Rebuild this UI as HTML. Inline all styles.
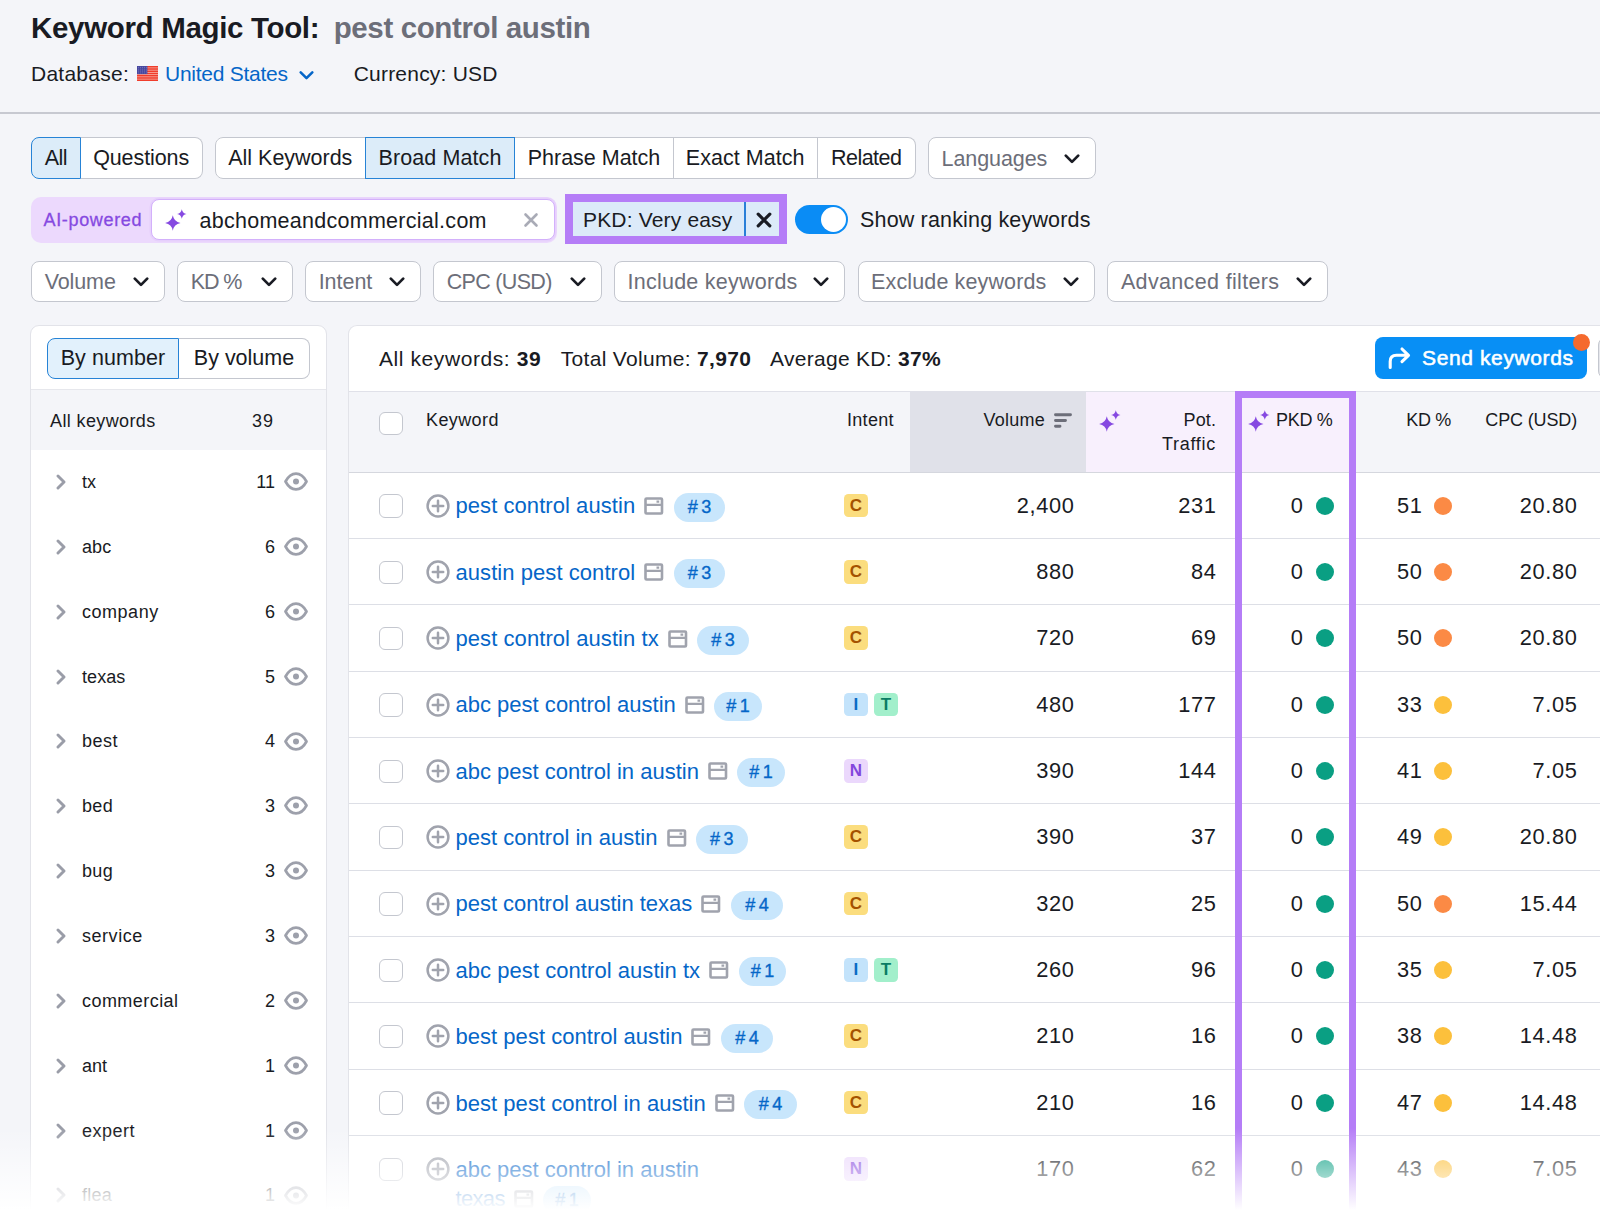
<!DOCTYPE html>
<html lang="en"><head><meta charset="utf-8"><title>Keyword Magic Tool: pest control austin</title>
<style>
*{box-sizing:border-box;margin:0;padding:0}
html,body{width:1600px;height:1213px;overflow:hidden;background:#f4f5f9}
body{font-family:"Liberation Sans",sans-serif;color:#191b23;font-size:20px}
#page{position:relative;width:1600px;height:1213px;overflow:hidden;background:#f4f5f9}
svg{display:block;flex:none}
.hdr{position:absolute;left:0;top:0;width:1600px;height:112px}
.title{position:absolute;left:31px;top:9.500px;height:36px;line-height:36px;font-size:29.500px;font-weight:700;white-space:nowrap}
.title .t2{color:#6c6e79;margin-left:14.500px;font-weight:700}
.dbrow{position:absolute;left:31px;top:60.500px;height:26px;line-height:26px;font-size:21px;white-space:nowrap;display:flex;align-items:center}
.flag{margin:0 7px 0 8px;position:relative;top:.2px;left:-.2px}
.dbv{color:#0566c8}
.dbchev{margin-left:10.500px;position:relative;top:1.500px;left:.5px;width:15px;height:15px}
.cur{margin-left:40.500px}
.hline{position:absolute;left:0;top:112px;width:1600px;height:2px;background:#c7c9d1}
.tabs{position:absolute;left:0;top:137px;width:1600px;height:42px}
.seg{position:absolute;top:0;height:42px;display:flex;border-radius:8px;background:#fff}
.sg{display:flex;align-items:center;justify-content:center;height:42px;line-height:24px;text-align:center;font-size:21.500px;border:1px solid #c4c7cf;border-left-width:0;background:#fff;white-space:nowrap}
.sg.first{border-left-width:1px;border-radius:8px 0 0 8px}
.sg.last{border-radius:0 8px 8px 0}
.sg.on{background:#dcecf9;border:1.800px solid #2683d6;position:relative;margin-left:-1px}
.sg.on.first{margin-left:0}
.dd{position:absolute;top:0;height:41px;border:1px solid #c4c7cf;border-radius:8px;background:#fff;display:flex;align-items:center;padding:0 15px 0 12.500px;color:#6c6e79;font-size:21.500px;white-space:nowrap}
.dd .ddl{position:relative;top:1px}
.sg em{position:relative;top:-.4px}
.dd .chev{margin-left:auto;position:relative;top:.7px}
.dd.tall{height:42px}
.airow{position:absolute;left:0;top:194px;width:1600px;height:50px}
.aibox{position:absolute;left:31px;top:2.500px;width:526px;height:46px;border-radius:10px;background:#ecd9fd;display:flex;align-items:center}
.ailabel{color:#8649e1;font-size:18px;margin-left:12.500px;width:107px;-webkit-text-stroke:.3px #8649e1;position:relative;top:1px}
.aiinput{width:404px;height:40.500px;background:#fff;border:1px solid #d3b0fb;border-radius:8px;display:flex;align-items:center;box-shadow:0 0 0 1.500px #e6d0fc}
.aiinput .spark{margin-left:13px}
.aidomain{margin-left:11px;font-size:21.500px;position:relative;top:1.500px}
.aix{margin-left:auto;margin-right:15px}
.pkdhl{position:absolute;left:564.700px;top:.3px;width:222px;height:49.500px;background:#b57df7;padding:8px}
.pkdchip{width:206px;height:33.500px;background:#dceaf9;display:flex;align-items:center;font-size:21px}
.pkdtxt{width:173.500px;padding-left:10.300px;height:33.500px;line-height:33.500px;border-right:2px solid #2a7fd8}
.pkdx{flex:1;display:flex;justify-content:center;position:relative;left:1.500px;top:.5px}
.pkdtxt em{position:relative;top:1px}
.toggle{position:absolute;left:795px;top:10.700px;width:52.500px;height:29px;border-radius:15px;background:#0a8cf5}
.knob{position:absolute;right:2px;top:2px;width:25px;height:25px;border-radius:13px;background:#fff}
.srk{position:absolute;left:860px;top:12px;line-height:28px;font-size:21.500px;white-space:nowrap}
.filters{position:absolute;left:0;top:261px;width:1600px;height:41px}
.left{position:absolute;left:31px;top:325px;width:295px;height:900px;background:#fff;border-radius:9px}
.left::after,.right::after{content:"";position:absolute;left:-1px;top:0;right:-.5px;bottom:0;border:1px solid #e2e3e9;border-radius:9px;pointer-events:none}
.seg2{position:absolute;left:16px;top:12.500px;height:41px;display:flex}
.seg2 .sg{height:41px;padding-top:1.500px}
.seg2 .sg.on{background:#e2f1fc}
.allkw{position:absolute;left:0;top:64px;width:295px;height:61px;border-top:1px solid #e6e7ec;background:#f4f5f9;font-size:18px}
.akl{position:absolute;left:19px;top:19.500px;line-height:22px}
.akn{position:absolute;right:52px;top:19.500px;line-height:22px}
.groups{list-style:none}
.groups li{position:absolute;left:-31px;width:325px;height:65px;margin-top:-325px;font-size:18px}
.rchev{position:absolute;left:55px;top:24px}
.gname{position:absolute;left:82px;top:21px;line-height:22px}
.gnum{position:absolute;right:50px;top:21px;line-height:22px}
.eye{position:absolute;left:284.300px;top:22.300px}
.right{position:absolute;left:349px;top:325px;width:1260px;height:900px;background:#fff;border-radius:9px 0 0 0}
.right::after{border-radius:9px 0 0 0;border-right:0}
.summary{position:absolute;left:30px;top:20.700px;line-height:26px;font-size:21px;white-space:nowrap}
.summary span{margin-right:18.800px}
.summary .s1{margin-right:19.600px}
.send{position:absolute;left:1026px;top:12px;width:212px;height:42px;border-radius:8px;background:#088ff5;color:#fff;display:flex;align-items:center;font-size:21px;white-space:nowrap}
.sendic{margin-left:12px}
.sendt{margin-left:11px;font-weight:400;-webkit-text-stroke:.55px #fff}
.odot{position:absolute;right:-3px;top:-3px;width:17px;height:17px;border-radius:50%;background:#f56a2e}
.morebtn{position:absolute;left:1249px;top:12px;width:20px;height:42px;border-radius:8px;background:#e6e7ec;border:1px solid #c4c7cf}
.thead{position:absolute;left:0;top:66px;width:1260px;height:82px;background:#f4f5f9;border-top:1px solid #e0e1e9;border-bottom:1px solid #d5d7de;font-size:18px}
.cb{position:absolute;left:30px;top:21.500px;width:23.500px;height:23.500px;border:1.500px solid #c4c7cf;border-radius:6px;background:#fff}
.th{position:absolute;top:17.300px;line-height:22px;white-space:nowrap}
.thk{left:77px}.thi{left:498px}
.thvol{position:absolute;left:561px;top:0;width:176px;height:80px;background:#e0e1e9}
.thvt{position:absolute;right:41px;top:17.300px;line-height:22px}
.sorticon{position:absolute;right:14px;top:21px}
.thpot{position:absolute;left:737px;top:0;width:151px;height:80px;background:#f8f0fd}
.thpot .spark{position:absolute;left:12.500px;top:16.500px}
.thpt{position:absolute;right:21px;top:17.300px;line-height:23.200px;text-align:right}
.thpkd{position:absolute;left:888px;top:0;width:118px;height:80px;background:#f8f0fd}
.thpkd .spark{position:absolute;left:10.500px;top:16.500px}
.thpk{position:absolute;left:39px;top:17.300px;line-height:22px}
.thkd{right:158px}.thcpc{right:32px}
.tr{position:absolute;left:0;width:1260px;height:66.400px;border-bottom:1px solid #dddfe6;font-size:21.800px}
.tr .plus{position:absolute;left:76.800px;top:21px}
.kwc{position:absolute;left:106.500px;top:18.800px;line-height:29.500px;white-space:nowrap;display:block;color:#0566c8;font-size:22px}
.kwc svg{display:inline-block;vertical-align:middle;position:relative;top:-1.700px}
.serp{margin-left:9px}
.rk{display:inline-block;vertical-align:middle;margin-left:9.500px;height:29px;line-height:29px;border-radius:15px;background:#c8e6fc;padding:0;text-align:center;text-indent:3.500px;font-size:18px;letter-spacing:3.500px;width:51.500px;position:relative;top:0px;-webkit-text-stroke:.35px #0566c8;color:#0566c8}
.intent{position:absolute;left:495.200px;top:21px;display:flex;gap:6.500px}
.ib{width:23.500px;height:23.500px;border-radius:4.500px;font-size:17px;font-weight:700;line-height:23.500px;text-align:center}
.ibC{background:#fbdd7e;color:#a45200}
.ibI{background:#c3e3fb;color:#0a6cc4}
.ibT{background:#a2efcb;color:#0a7c64}
.ibN{background:#ebd8fc;color:#8346dc}
.num{position:absolute;top:19px;line-height:28px;text-align:right;white-space:nowrap;letter-spacing:.7px;margin-right:-.7px}
.vol{right:535px}.pot{right:393px}.pkd{right:306px}.kd{right:187px}.cpc{right:32px}
.dot{position:absolute;top:24px;width:18px;height:18px;border-radius:50%}
.dg{left:967px;background:#0a9f83}
.do{left:1085px;background:#fb8a45}
.dy{left:1085px;background:#fcc03c}
.pkdcol{position:absolute;left:886px;top:66px;width:121px;height:840px;border:7.500px solid #b57df7;border-bottom:0}
.fade{position:absolute;left:0;top:1128px;width:1600px;height:85px;background:linear-gradient(to bottom,rgba(255,255,255,0),#fff 82px,#fff)}
.tr.wrap{height:90px}
em{font-style:normal}

.rk1{width:47.500px}
.rk4{width:52.300px}

#t1{letter-spacing:-0.33px}
#t2{letter-spacing:-0.38px}
#dbl{letter-spacing:0.25px}
#dbv{letter-spacing:-0.26px}
#cur{letter-spacing:0.21px}
#tb1{letter-spacing:-0.66px}
#tb2{letter-spacing:-0.10px}
#tb3{letter-spacing:-0.02px}
#tb4{letter-spacing:0.11px}
#tb5{letter-spacing:-0.02px}
#tb6{letter-spacing:0.03px}
#tb7{letter-spacing:-0.52px}
#dd1{letter-spacing:-0.07px}
#ail{letter-spacing:0.66px}
#aid{letter-spacing:0.27px}
#pkt{letter-spacing:0.17px}
#srk{letter-spacing:0.17px}
#dd2{letter-spacing:-0.11px}
#dd3{letter-spacing:-1.12px}
#dd4{letter-spacing:-0.04px}
#dd5{letter-spacing:-0.68px}
#dd6{letter-spacing:0.25px}
#dd7{letter-spacing:0.13px}
#dd8{letter-spacing:0.35px}
#tb8{letter-spacing:0.07px}
#tb9{letter-spacing:-0.01px}
#akl{letter-spacing:0.38px}
#akn{letter-spacing:0.97px}
#g1{letter-spacing:0.10px}
#g2{letter-spacing:0.09px}
#g3{letter-spacing:0.52px}
#g4{letter-spacing:0.07px}
#s1{letter-spacing:0.58px}
#s2{letter-spacing:0.31px}
#s3{letter-spacing:0.30px}
#sendt{letter-spacing:0.62px}
#thk{letter-spacing:0.40px}
#thi{letter-spacing:0.29px}
#thv{letter-spacing:0.25px}
#thp1{letter-spacing:0.09px}
#thp2{letter-spacing:0.72px}
#thpk{letter-spacing:-0.30px}
#thkd{letter-spacing:-0.34px}
#thcpc{letter-spacing:-0.15px}
#kw1{letter-spacing:0.06px}
#kw2{letter-spacing:0.06px}
#kw3{letter-spacing:0.07px}
#kw4{letter-spacing:0.01px}
#kw5{letter-spacing:0.00px}
#kw6{letter-spacing:0.01px}
#kw7{letter-spacing:-0.02px}
#kw8{letter-spacing:0.05px}
#kw9{letter-spacing:0.03px}
#kw10{letter-spacing:0.03px}
#kw11{letter-spacing:0.00px}
#kw11b{letter-spacing:-0.67px}
#g5{letter-spacing:0.53px}
#g6{letter-spacing:0.33px}
#g7{letter-spacing:0.33px}
#g8{letter-spacing:0.54px}
#g9{letter-spacing:0.45px}
#g10{letter-spacing:-0.01px}
#g11{letter-spacing:0.50px}
#g12{letter-spacing:0.23px}
</style></head><body>
<div id="page">
<header class="hdr">
<h1 class="title"><span class="t1" id="t1">Keyword Magic Tool:</span><span class="t2" id="t2">pest control austin</span></h1>
<div class="dbrow"><span class="dbl" id="dbl">Database:</span><svg class="flag" viewBox="0 0 21 15" width="21" height="15"><rect width="21" height="15" fill="#f9c4ba"/><g fill="#f03d2c"><rect y="0.00" width="21" height="1.560"/><rect y="2.24" width="21" height="1.560"/><rect y="4.48" width="21" height="1.560"/><rect y="6.72" width="21" height="1.560"/><rect y="8.96" width="21" height="1.560"/><rect y="11.20" width="21" height="1.560"/><rect y="13.44" width="21" height="1.560"/></g><rect width="10.400" height="8.100" fill="#46479f"/><g fill="#a9a6d8"><circle cx="1.3" cy="1.2" r=".45"/><circle cx="1.3" cy="3.1" r=".45"/><circle cx="1.3" cy="5.0" r=".45"/><circle cx="1.3" cy="6.9" r=".45"/><circle cx="3.3" cy="1.2" r=".45"/><circle cx="3.3" cy="3.1" r=".45"/><circle cx="3.3" cy="5.0" r=".45"/><circle cx="3.3" cy="6.9" r=".45"/><circle cx="5.3" cy="1.2" r=".45"/><circle cx="5.3" cy="3.1" r=".45"/><circle cx="5.3" cy="5.0" r=".45"/><circle cx="5.3" cy="6.9" r=".45"/><circle cx="7.3" cy="1.2" r=".45"/><circle cx="7.3" cy="3.1" r=".45"/><circle cx="7.3" cy="5.0" r=".45"/><circle cx="7.3" cy="6.9" r=".45"/><circle cx="9.3" cy="1.2" r=".45"/><circle cx="9.3" cy="3.1" r=".45"/><circle cx="9.3" cy="5.0" r=".45"/><circle cx="9.3" cy="6.9" r=".45"/></g></svg><span class="dbv" id="dbv">United States</span><svg class="chev dbchev" viewBox="0 0 16 16" width="16" height="16"><path d="M1.800 4.600 L8 10.900 L14.200 4.600" fill="none" stroke="#0566c8" stroke-width="2.700" stroke-linecap="round" stroke-linejoin="round"/></svg><span class="cur" id="cur">Currency: USD</span></div>
</header>
<div class="hline"></div>
<nav class="tabs">
<div class="seg" style="left:31px;width:171.600px"><span class="sg on first" style="width:49.600px"><em id="tb1">All</em></span><span class="sg last" style="width:122px"><em id="tb2">Questions</em></span></div>
<div class="seg" style="left:215px;width:700.700px"><span class="sg first" style="width:150.600px"><em id="tb3">All Keywords</em></span><span class="sg on" style="width:150.800px"><em id="tb4">Broad Match</em></span><span class="sg" style="width:158.200px"><em id="tb5">Phrase Match</em></span><span class="sg" style="width:144.100px"><em id="tb6">Exact Match</em></span><span class="sg last" style="width:98px"><em id="tb7">Related</em></span></div>
<div class="dd tall" style="left:928px;width:168px"><span class="ddl" id="dd1">Languages</span><svg class="chev" viewBox="0 0 16 16" width="16" height="16"><path d="M1.800 4.600 L8 10.900 L14.200 4.600" fill="none" stroke="#191b23" stroke-width="2.700" stroke-linecap="round" stroke-linejoin="round"/></svg></div>
</nav>
<section class="airow">
<div class="aibox"><span class="ailabel" id="ail">AI-powered</span><div class="aiinput"><svg class="spark" viewBox="0 0 24 24" width="24" height="24"><path d="M7.80 7.30 Q8.95 13.85 15.50 15.00 Q8.95 16.15 7.80 22.70 Q6.65 16.15 0.10 15.00 Q6.65 13.85 7.80 7.30Z M16.80 1.30 Q17.55 5.25 21.50 6.00 Q17.55 6.75 16.80 10.70 Q16.05 6.75 12.10 6.00 Q16.05 5.25 16.80 1.30Z" fill="#8649e1"/></svg><span class="aidomain" id="aid">abchomeandcommercial.com</span><svg class="aix" viewBox="0 0 16 16" width="16" height="16"><path d="M2.500 2.500 L13.500 13.500 M13.500 2.500 L2.500 13.500" stroke="#a9abb6" stroke-width="2.600" stroke-linecap="round"/></svg></div></div>
<div class="pkdhl"><div class="pkdchip"><span class="pkdtxt"><em id="pkt">PKD: Very easy</em></span><span class="pkdx"><svg viewBox="0 0 16 16" width="16" height="16"><path d="M2.200 2.200 L13.800 13.800 M13.800 2.200 L2.200 13.800" stroke="#191b23" stroke-width="3.200" stroke-linecap="round"/></svg></span></div></div>
<div class="toggle"><span class="knob"></span></div><span class="srk" id="srk">Show ranking keywords</span>
</section>
<section class="filters">
<div class="dd " style="left:31.2px;width:133.8px"><span class="ddl" id="dd2">Volume</span><svg class="chev" viewBox="0 0 16 16" width="16" height="16"><path d="M1.800 4.600 L8 10.900 L14.200 4.600" fill="none" stroke="#191b23" stroke-width="2.700" stroke-linecap="round" stroke-linejoin="round"/></svg></div>
<div class="dd " style="left:177.2px;width:115.8px"><span class="ddl" id="dd3">KD %</span><svg class="chev" viewBox="0 0 16 16" width="16" height="16"><path d="M1.800 4.600 L8 10.900 L14.200 4.600" fill="none" stroke="#191b23" stroke-width="2.700" stroke-linecap="round" stroke-linejoin="round"/></svg></div>
<div class="dd " style="left:305.2px;width:115.8px"><span class="ddl" id="dd4">Intent</span><svg class="chev" viewBox="0 0 16 16" width="16" height="16"><path d="M1.800 4.600 L8 10.900 L14.200 4.600" fill="none" stroke="#191b23" stroke-width="2.700" stroke-linecap="round" stroke-linejoin="round"/></svg></div>
<div class="dd " style="left:433.2px;width:168.6px"><span class="ddl" id="dd5">CPC (USD)</span><svg class="chev" viewBox="0 0 16 16" width="16" height="16"><path d="M1.800 4.600 L8 10.900 L14.200 4.600" fill="none" stroke="#191b23" stroke-width="2.700" stroke-linecap="round" stroke-linejoin="round"/></svg></div>
<div class="dd " style="left:614px;width:231.2px"><span class="ddl" id="dd6">Include keywords</span><svg class="chev" viewBox="0 0 16 16" width="16" height="16"><path d="M1.800 4.600 L8 10.900 L14.200 4.600" fill="none" stroke="#191b23" stroke-width="2.700" stroke-linecap="round" stroke-linejoin="round"/></svg></div>
<div class="dd " style="left:857.6px;width:237.8px"><span class="ddl" id="dd7">Exclude keywords</span><svg class="chev" viewBox="0 0 16 16" width="16" height="16"><path d="M1.800 4.600 L8 10.900 L14.200 4.600" fill="none" stroke="#191b23" stroke-width="2.700" stroke-linecap="round" stroke-linejoin="round"/></svg></div>
<div class="dd " style="left:1107.4px;width:220.2px"><span class="ddl" id="dd8">Advanced filters</span><svg class="chev" viewBox="0 0 16 16" width="16" height="16"><path d="M1.800 4.600 L8 10.900 L14.200 4.600" fill="none" stroke="#191b23" stroke-width="2.700" stroke-linecap="round" stroke-linejoin="round"/></svg></div>
</section>
<aside class="left">
<div class="seg2"><span class="sg on first" style="width:132px"><em id="tb8">By number</em></span><span class="sg last" style="width:131px"><em id="tb9">By volume</em></span></div>
<div class="allkw"><span class="akl" id="akl">All keywords</span><span class="akn" id="akn">39</span></div>
<ul class="groups">
<li style="top:450.0px"><svg class="rchev" viewBox="0 0 12 16" width="12" height="16"><path d="M3 2 L9 8 L3 14" fill="none" stroke="#9a9da8" stroke-width="2.900" stroke-linecap="round" stroke-linejoin="round"/></svg><span class="gname" id="g1">tx</span><span class="gnum">11</span><svg class="eye" viewBox="0 0 24 19" width="24" height="19"><path d="M1.500 9.500 C4 4.800 7.800 1.600 12 1.600 C16.200 1.600 20 4.800 22.500 9.500 C20 14.200 16.200 17.400 12 17.400 C7.800 17.400 4 14.200 1.500 9.500Z" fill="none" stroke="#9da0ab" stroke-width="2.700" stroke-linejoin="round"/><circle cx="12" cy="9.500" r="3" fill="#9da0ab"/></svg></li>
<li style="top:514.9px"><svg class="rchev" viewBox="0 0 12 16" width="12" height="16"><path d="M3 2 L9 8 L3 14" fill="none" stroke="#9a9da8" stroke-width="2.900" stroke-linecap="round" stroke-linejoin="round"/></svg><span class="gname" id="g2">abc</span><span class="gnum">6</span><svg class="eye" viewBox="0 0 24 19" width="24" height="19"><path d="M1.500 9.500 C4 4.800 7.800 1.600 12 1.600 C16.200 1.600 20 4.800 22.500 9.500 C20 14.200 16.200 17.400 12 17.400 C7.800 17.400 4 14.200 1.500 9.500Z" fill="none" stroke="#9da0ab" stroke-width="2.700" stroke-linejoin="round"/><circle cx="12" cy="9.500" r="3" fill="#9da0ab"/></svg></li>
<li style="top:579.7px"><svg class="rchev" viewBox="0 0 12 16" width="12" height="16"><path d="M3 2 L9 8 L3 14" fill="none" stroke="#9a9da8" stroke-width="2.900" stroke-linecap="round" stroke-linejoin="round"/></svg><span class="gname" id="g3">company</span><span class="gnum">6</span><svg class="eye" viewBox="0 0 24 19" width="24" height="19"><path d="M1.500 9.500 C4 4.800 7.800 1.600 12 1.600 C16.200 1.600 20 4.800 22.500 9.500 C20 14.200 16.200 17.400 12 17.400 C7.800 17.400 4 14.200 1.500 9.500Z" fill="none" stroke="#9da0ab" stroke-width="2.700" stroke-linejoin="round"/><circle cx="12" cy="9.500" r="3" fill="#9da0ab"/></svg></li>
<li style="top:644.5px"><svg class="rchev" viewBox="0 0 12 16" width="12" height="16"><path d="M3 2 L9 8 L3 14" fill="none" stroke="#9a9da8" stroke-width="2.900" stroke-linecap="round" stroke-linejoin="round"/></svg><span class="gname" id="g4">texas</span><span class="gnum">5</span><svg class="eye" viewBox="0 0 24 19" width="24" height="19"><path d="M1.500 9.500 C4 4.800 7.800 1.600 12 1.600 C16.200 1.600 20 4.800 22.500 9.500 C20 14.200 16.200 17.400 12 17.400 C7.800 17.400 4 14.200 1.500 9.500Z" fill="none" stroke="#9da0ab" stroke-width="2.700" stroke-linejoin="round"/><circle cx="12" cy="9.500" r="3" fill="#9da0ab"/></svg></li>
<li style="top:709.4px"><svg class="rchev" viewBox="0 0 12 16" width="12" height="16"><path d="M3 2 L9 8 L3 14" fill="none" stroke="#9a9da8" stroke-width="2.900" stroke-linecap="round" stroke-linejoin="round"/></svg><span class="gname" id="g5">best</span><span class="gnum">4</span><svg class="eye" viewBox="0 0 24 19" width="24" height="19"><path d="M1.500 9.500 C4 4.800 7.800 1.600 12 1.600 C16.200 1.600 20 4.800 22.500 9.500 C20 14.200 16.200 17.400 12 17.400 C7.800 17.400 4 14.200 1.500 9.500Z" fill="none" stroke="#9da0ab" stroke-width="2.700" stroke-linejoin="round"/><circle cx="12" cy="9.500" r="3" fill="#9da0ab"/></svg></li>
<li style="top:774.2px"><svg class="rchev" viewBox="0 0 12 16" width="12" height="16"><path d="M3 2 L9 8 L3 14" fill="none" stroke="#9a9da8" stroke-width="2.900" stroke-linecap="round" stroke-linejoin="round"/></svg><span class="gname" id="g6">bed</span><span class="gnum">3</span><svg class="eye" viewBox="0 0 24 19" width="24" height="19"><path d="M1.500 9.500 C4 4.800 7.800 1.600 12 1.600 C16.200 1.600 20 4.800 22.500 9.500 C20 14.200 16.200 17.400 12 17.400 C7.800 17.400 4 14.200 1.500 9.500Z" fill="none" stroke="#9da0ab" stroke-width="2.700" stroke-linejoin="round"/><circle cx="12" cy="9.500" r="3" fill="#9da0ab"/></svg></li>
<li style="top:839.1px"><svg class="rchev" viewBox="0 0 12 16" width="12" height="16"><path d="M3 2 L9 8 L3 14" fill="none" stroke="#9a9da8" stroke-width="2.900" stroke-linecap="round" stroke-linejoin="round"/></svg><span class="gname" id="g7">bug</span><span class="gnum">3</span><svg class="eye" viewBox="0 0 24 19" width="24" height="19"><path d="M1.500 9.500 C4 4.800 7.800 1.600 12 1.600 C16.200 1.600 20 4.800 22.500 9.500 C20 14.200 16.200 17.400 12 17.400 C7.800 17.400 4 14.200 1.500 9.500Z" fill="none" stroke="#9da0ab" stroke-width="2.700" stroke-linejoin="round"/><circle cx="12" cy="9.500" r="3" fill="#9da0ab"/></svg></li>
<li style="top:903.9px"><svg class="rchev" viewBox="0 0 12 16" width="12" height="16"><path d="M3 2 L9 8 L3 14" fill="none" stroke="#9a9da8" stroke-width="2.900" stroke-linecap="round" stroke-linejoin="round"/></svg><span class="gname" id="g8">service</span><span class="gnum">3</span><svg class="eye" viewBox="0 0 24 19" width="24" height="19"><path d="M1.500 9.500 C4 4.800 7.800 1.600 12 1.600 C16.200 1.600 20 4.800 22.500 9.500 C20 14.200 16.200 17.400 12 17.400 C7.800 17.400 4 14.200 1.500 9.500Z" fill="none" stroke="#9da0ab" stroke-width="2.700" stroke-linejoin="round"/><circle cx="12" cy="9.500" r="3" fill="#9da0ab"/></svg></li>
<li style="top:968.8px"><svg class="rchev" viewBox="0 0 12 16" width="12" height="16"><path d="M3 2 L9 8 L3 14" fill="none" stroke="#9a9da8" stroke-width="2.900" stroke-linecap="round" stroke-linejoin="round"/></svg><span class="gname" id="g9">commercial</span><span class="gnum">2</span><svg class="eye" viewBox="0 0 24 19" width="24" height="19"><path d="M1.500 9.500 C4 4.800 7.800 1.600 12 1.600 C16.200 1.600 20 4.800 22.500 9.500 C20 14.200 16.200 17.400 12 17.400 C7.800 17.400 4 14.200 1.500 9.500Z" fill="none" stroke="#9da0ab" stroke-width="2.700" stroke-linejoin="round"/><circle cx="12" cy="9.500" r="3" fill="#9da0ab"/></svg></li>
<li style="top:1033.7px"><svg class="rchev" viewBox="0 0 12 16" width="12" height="16"><path d="M3 2 L9 8 L3 14" fill="none" stroke="#9a9da8" stroke-width="2.900" stroke-linecap="round" stroke-linejoin="round"/></svg><span class="gname" id="g10">ant</span><span class="gnum">1</span><svg class="eye" viewBox="0 0 24 19" width="24" height="19"><path d="M1.500 9.500 C4 4.800 7.800 1.600 12 1.600 C16.200 1.600 20 4.800 22.500 9.500 C20 14.200 16.200 17.400 12 17.400 C7.800 17.400 4 14.200 1.500 9.500Z" fill="none" stroke="#9da0ab" stroke-width="2.700" stroke-linejoin="round"/><circle cx="12" cy="9.500" r="3" fill="#9da0ab"/></svg></li>
<li style="top:1098.5px"><svg class="rchev" viewBox="0 0 12 16" width="12" height="16"><path d="M3 2 L9 8 L3 14" fill="none" stroke="#9a9da8" stroke-width="2.900" stroke-linecap="round" stroke-linejoin="round"/></svg><span class="gname" id="g11">expert</span><span class="gnum">1</span><svg class="eye" viewBox="0 0 24 19" width="24" height="19"><path d="M1.500 9.500 C4 4.800 7.800 1.600 12 1.600 C16.200 1.600 20 4.800 22.500 9.500 C20 14.200 16.200 17.400 12 17.400 C7.800 17.400 4 14.200 1.500 9.500Z" fill="none" stroke="#9da0ab" stroke-width="2.700" stroke-linejoin="round"/><circle cx="12" cy="9.500" r="3" fill="#9da0ab"/></svg></li>
<li style="top:1163.3px"><svg class="rchev" viewBox="0 0 12 16" width="12" height="16"><path d="M3 2 L9 8 L3 14" fill="none" stroke="#9a9da8" stroke-width="2.900" stroke-linecap="round" stroke-linejoin="round"/></svg><span class="gname" id="g12">flea</span><span class="gnum">1</span><svg class="eye" viewBox="0 0 24 19" width="24" height="19"><path d="M1.500 9.500 C4 4.800 7.800 1.600 12 1.600 C16.200 1.600 20 4.800 22.500 9.500 C20 14.200 16.200 17.400 12 17.400 C7.800 17.400 4 14.200 1.500 9.500Z" fill="none" stroke="#9da0ab" stroke-width="2.700" stroke-linejoin="round"/><circle cx="12" cy="9.500" r="3" fill="#9da0ab"/></svg></li>
</ul>
</aside>
<main class="right">
<div class="summary"><span class="s1" id="s1">All keywords: <b>39</b></span><span class="s2" id="s2">Total Volume: <b>7,970</b></span><span class="s3" id="s3">Average KD: <b>37%</b></span></div>
<div class="send"><svg class="sendic" viewBox="0 0 24 24" width="24" height="24"><path d="M3.200 21.500 V15.500 Q3.200 9.300 9.500 9.300 H21 M15 3 L21.500 9.300 L15 15.600" fill="none" stroke="#fff" stroke-width="3.100" stroke-linecap="round" stroke-linejoin="round"/></svg><span class="sendt" id="sendt">Send keywords</span><span class="odot"></span></div><div class="morebtn"></div>
<div class="thead">
<span class="cb" style="left:30px;top:19.500px"></span><span class="th thk" id="thk">Keyword</span><span class="th thi" id="thi">Intent</span><div class="thvol"><span class="thvt" id="thv">Volume</span><svg class="sorticon" viewBox="0 0 18 15" width="18" height="15"><path d="M1.500 1.800 H16.500 M1.500 7.500 H11.500 M1.500 13.200 H6" stroke="#6c6e79" stroke-width="2.900" stroke-linecap="round"/></svg></div><div class="thpot"><svg class="spark" viewBox="0 0 24 24" width="24" height="24"><path d="M7.80 7.30 Q8.95 13.85 15.50 15.00 Q8.95 16.15 7.80 22.70 Q6.65 16.15 0.10 15.00 Q6.65 13.85 7.80 7.30Z M16.80 1.30 Q17.55 5.25 21.50 6.00 Q17.55 6.75 16.80 10.70 Q16.05 6.75 12.10 6.00 Q16.05 5.25 16.80 1.30Z" fill="#8649e1"/></svg><span class="thpt"><em id="thp1">Pot.</em><br><em id="thp2">Traffic</em></span></div><div class="thpkd"><svg class="spark" viewBox="0 0 24 24" width="24" height="24"><path d="M7.80 7.30 Q8.95 13.85 15.50 15.00 Q8.95 16.15 7.80 22.70 Q6.65 16.15 0.10 15.00 Q6.65 13.85 7.80 7.30Z M16.80 1.30 Q17.55 5.25 21.50 6.00 Q17.55 6.75 16.80 10.70 Q16.05 6.75 12.10 6.00 Q16.05 5.25 16.80 1.30Z" fill="#8649e1"/></svg><span class="thpk" id="thpk">PKD %</span></div><span class="th thkd" id="thkd">KD %</span><span class="th thcpc" id="thcpc">CPC (USD)</span>
</div>
<div class="tr" style="top:147.6px"><span class="cb"></span><svg class="plus" viewBox="0 0 24 24" width="24" height="24"><circle cx="12" cy="12" r="10.400" fill="none" stroke="#a0a3ad" stroke-width="2.500"/><path d="M12 6.800 V17.200 M6.800 12 H17.200" stroke="#a0a3ad" stroke-width="2.500" stroke-linecap="round"/></svg><span class="kwc"><span class="kw" id="kw1">pest control austin</span><svg class="serp" viewBox="0 0 20 18" width="20" height="18"><rect x="1.500" y="1.500" width="16.500" height="15" rx="1" fill="none" stroke="#a0a3ad" stroke-width="2.600"/><path d="M1.500 7.800 H18 M12.500 4.600 H15.200" stroke="#a0a3ad" stroke-width="2.200"/></svg><span class="rk rk3">#3</span></span><span class="intent"><span class="ib ibC">C</span></span><span class="num vol">2,400</span><span class="num pot">231</span><span class="num pkd">0</span><i class="dot dg"></i><span class="num kd">51</span><i class="dot do"></i><span class="num cpc">20.80</span></div>
<div class="tr" style="top:214.0px"><span class="cb"></span><svg class="plus" viewBox="0 0 24 24" width="24" height="24"><circle cx="12" cy="12" r="10.400" fill="none" stroke="#a0a3ad" stroke-width="2.500"/><path d="M12 6.800 V17.200 M6.800 12 H17.200" stroke="#a0a3ad" stroke-width="2.500" stroke-linecap="round"/></svg><span class="kwc"><span class="kw" id="kw2">austin pest control</span><svg class="serp" viewBox="0 0 20 18" width="20" height="18"><rect x="1.500" y="1.500" width="16.500" height="15" rx="1" fill="none" stroke="#a0a3ad" stroke-width="2.600"/><path d="M1.500 7.800 H18 M12.500 4.600 H15.200" stroke="#a0a3ad" stroke-width="2.200"/></svg><span class="rk rk3">#3</span></span><span class="intent"><span class="ib ibC">C</span></span><span class="num vol">880</span><span class="num pot">84</span><span class="num pkd">0</span><i class="dot dg"></i><span class="num kd">50</span><i class="dot do"></i><span class="num cpc">20.80</span></div>
<div class="tr" style="top:280.3px"><span class="cb"></span><svg class="plus" viewBox="0 0 24 24" width="24" height="24"><circle cx="12" cy="12" r="10.400" fill="none" stroke="#a0a3ad" stroke-width="2.500"/><path d="M12 6.800 V17.200 M6.800 12 H17.200" stroke="#a0a3ad" stroke-width="2.500" stroke-linecap="round"/></svg><span class="kwc"><span class="kw" id="kw3">pest control austin tx</span><svg class="serp" viewBox="0 0 20 18" width="20" height="18"><rect x="1.500" y="1.500" width="16.500" height="15" rx="1" fill="none" stroke="#a0a3ad" stroke-width="2.600"/><path d="M1.500 7.800 H18 M12.500 4.600 H15.200" stroke="#a0a3ad" stroke-width="2.200"/></svg><span class="rk rk3">#3</span></span><span class="intent"><span class="ib ibC">C</span></span><span class="num vol">720</span><span class="num pot">69</span><span class="num pkd">0</span><i class="dot dg"></i><span class="num kd">50</span><i class="dot do"></i><span class="num cpc">20.80</span></div>
<div class="tr" style="top:346.6px"><span class="cb"></span><svg class="plus" viewBox="0 0 24 24" width="24" height="24"><circle cx="12" cy="12" r="10.400" fill="none" stroke="#a0a3ad" stroke-width="2.500"/><path d="M12 6.800 V17.200 M6.800 12 H17.200" stroke="#a0a3ad" stroke-width="2.500" stroke-linecap="round"/></svg><span class="kwc"><span class="kw" id="kw4">abc pest control austin</span><svg class="serp" viewBox="0 0 20 18" width="20" height="18"><rect x="1.500" y="1.500" width="16.500" height="15" rx="1" fill="none" stroke="#a0a3ad" stroke-width="2.600"/><path d="M1.500 7.800 H18 M12.500 4.600 H15.200" stroke="#a0a3ad" stroke-width="2.200"/></svg><span class="rk rk1">#1</span></span><span class="intent"><span class="ib ibI">I</span><span class="ib ibT">T</span></span><span class="num vol">480</span><span class="num pot">177</span><span class="num pkd">0</span><i class="dot dg"></i><span class="num kd">33</span><i class="dot dy"></i><span class="num cpc">7.05</span></div>
<div class="tr" style="top:413.0px"><span class="cb"></span><svg class="plus" viewBox="0 0 24 24" width="24" height="24"><circle cx="12" cy="12" r="10.400" fill="none" stroke="#a0a3ad" stroke-width="2.500"/><path d="M12 6.800 V17.200 M6.800 12 H17.200" stroke="#a0a3ad" stroke-width="2.500" stroke-linecap="round"/></svg><span class="kwc"><span class="kw" id="kw5">abc pest control in austin</span><svg class="serp" viewBox="0 0 20 18" width="20" height="18"><rect x="1.500" y="1.500" width="16.500" height="15" rx="1" fill="none" stroke="#a0a3ad" stroke-width="2.600"/><path d="M1.500 7.800 H18 M12.500 4.600 H15.200" stroke="#a0a3ad" stroke-width="2.200"/></svg><span class="rk rk1">#1</span></span><span class="intent"><span class="ib ibN">N</span></span><span class="num vol">390</span><span class="num pot">144</span><span class="num pkd">0</span><i class="dot dg"></i><span class="num kd">41</span><i class="dot dy"></i><span class="num cpc">7.05</span></div>
<div class="tr" style="top:479.4px"><span class="cb"></span><svg class="plus" viewBox="0 0 24 24" width="24" height="24"><circle cx="12" cy="12" r="10.400" fill="none" stroke="#a0a3ad" stroke-width="2.500"/><path d="M12 6.800 V17.200 M6.800 12 H17.200" stroke="#a0a3ad" stroke-width="2.500" stroke-linecap="round"/></svg><span class="kwc"><span class="kw" id="kw6">pest control in austin</span><svg class="serp" viewBox="0 0 20 18" width="20" height="18"><rect x="1.500" y="1.500" width="16.500" height="15" rx="1" fill="none" stroke="#a0a3ad" stroke-width="2.600"/><path d="M1.500 7.800 H18 M12.500 4.600 H15.200" stroke="#a0a3ad" stroke-width="2.200"/></svg><span class="rk rk3">#3</span></span><span class="intent"><span class="ib ibC">C</span></span><span class="num vol">390</span><span class="num pot">37</span><span class="num pkd">0</span><i class="dot dg"></i><span class="num kd">49</span><i class="dot dy"></i><span class="num cpc">20.80</span></div>
<div class="tr" style="top:545.7px"><span class="cb"></span><svg class="plus" viewBox="0 0 24 24" width="24" height="24"><circle cx="12" cy="12" r="10.400" fill="none" stroke="#a0a3ad" stroke-width="2.500"/><path d="M12 6.800 V17.200 M6.800 12 H17.200" stroke="#a0a3ad" stroke-width="2.500" stroke-linecap="round"/></svg><span class="kwc"><span class="kw" id="kw7">pest control austin texas</span><svg class="serp" viewBox="0 0 20 18" width="20" height="18"><rect x="1.500" y="1.500" width="16.500" height="15" rx="1" fill="none" stroke="#a0a3ad" stroke-width="2.600"/><path d="M1.500 7.800 H18 M12.500 4.600 H15.200" stroke="#a0a3ad" stroke-width="2.200"/></svg><span class="rk rk4">#4</span></span><span class="intent"><span class="ib ibC">C</span></span><span class="num vol">320</span><span class="num pot">25</span><span class="num pkd">0</span><i class="dot dg"></i><span class="num kd">50</span><i class="dot do"></i><span class="num cpc">15.44</span></div>
<div class="tr" style="top:612.0px"><span class="cb"></span><svg class="plus" viewBox="0 0 24 24" width="24" height="24"><circle cx="12" cy="12" r="10.400" fill="none" stroke="#a0a3ad" stroke-width="2.500"/><path d="M12 6.800 V17.200 M6.800 12 H17.200" stroke="#a0a3ad" stroke-width="2.500" stroke-linecap="round"/></svg><span class="kwc"><span class="kw" id="kw8">abc pest control austin tx</span><svg class="serp" viewBox="0 0 20 18" width="20" height="18"><rect x="1.500" y="1.500" width="16.500" height="15" rx="1" fill="none" stroke="#a0a3ad" stroke-width="2.600"/><path d="M1.500 7.800 H18 M12.500 4.600 H15.200" stroke="#a0a3ad" stroke-width="2.200"/></svg><span class="rk rk1">#1</span></span><span class="intent"><span class="ib ibI">I</span><span class="ib ibT">T</span></span><span class="num vol">260</span><span class="num pot">96</span><span class="num pkd">0</span><i class="dot dg"></i><span class="num kd">35</span><i class="dot dy"></i><span class="num cpc">7.05</span></div>
<div class="tr" style="top:678.4px"><span class="cb"></span><svg class="plus" viewBox="0 0 24 24" width="24" height="24"><circle cx="12" cy="12" r="10.400" fill="none" stroke="#a0a3ad" stroke-width="2.500"/><path d="M12 6.800 V17.200 M6.800 12 H17.200" stroke="#a0a3ad" stroke-width="2.500" stroke-linecap="round"/></svg><span class="kwc"><span class="kw" id="kw9">best pest control austin</span><svg class="serp" viewBox="0 0 20 18" width="20" height="18"><rect x="1.500" y="1.500" width="16.500" height="15" rx="1" fill="none" stroke="#a0a3ad" stroke-width="2.600"/><path d="M1.500 7.800 H18 M12.500 4.600 H15.200" stroke="#a0a3ad" stroke-width="2.200"/></svg><span class="rk rk4">#4</span></span><span class="intent"><span class="ib ibC">C</span></span><span class="num vol">210</span><span class="num pot">16</span><span class="num pkd">0</span><i class="dot dg"></i><span class="num kd">38</span><i class="dot dy"></i><span class="num cpc">14.48</span></div>
<div class="tr" style="top:744.8px"><span class="cb"></span><svg class="plus" viewBox="0 0 24 24" width="24" height="24"><circle cx="12" cy="12" r="10.400" fill="none" stroke="#a0a3ad" stroke-width="2.500"/><path d="M12 6.800 V17.200 M6.800 12 H17.200" stroke="#a0a3ad" stroke-width="2.500" stroke-linecap="round"/></svg><span class="kwc"><span class="kw" id="kw10">best pest control in austin</span><svg class="serp" viewBox="0 0 20 18" width="20" height="18"><rect x="1.500" y="1.500" width="16.500" height="15" rx="1" fill="none" stroke="#a0a3ad" stroke-width="2.600"/><path d="M1.500 7.800 H18 M12.500 4.600 H15.200" stroke="#a0a3ad" stroke-width="2.200"/></svg><span class="rk rk4">#4</span></span><span class="intent"><span class="ib ibC">C</span></span><span class="num vol">210</span><span class="num pot">16</span><span class="num pkd">0</span><i class="dot dg"></i><span class="num kd">47</span><i class="dot dy"></i><span class="num cpc">14.48</span></div>
<div class="tr wrap" style="top:811.1px"><span class="cb"></span><svg class="plus" viewBox="0 0 24 24" width="24" height="24"><circle cx="12" cy="12" r="10.400" fill="none" stroke="#a0a3ad" stroke-width="2.500"/><path d="M12 6.800 V17.200 M6.800 12 H17.200" stroke="#a0a3ad" stroke-width="2.500" stroke-linecap="round"/></svg><span class="kwc"><span class="kw" id="kw11">abc pest control in austin</span><br><span class="kw" id="kw11b">texas</span><svg class="serp" viewBox="0 0 20 18" width="20" height="18"><rect x="1.500" y="1.500" width="16.500" height="15" rx="1" fill="none" stroke="#a0a3ad" stroke-width="2.600"/><path d="M1.500 7.800 H18 M12.500 4.600 H15.200" stroke="#a0a3ad" stroke-width="2.200"/></svg><span class="rk rk1">#1</span></span><span class="intent"><span class="ib ibN">N</span></span><span class="num vol">170</span><span class="num pot">62</span><span class="num pkd">0</span><i class="dot dg"></i><span class="num kd">43</span><i class="dot dy"></i><span class="num cpc">7.05</span></div>
<div class="pkdcol"></div>
</main>
<div class="fade"></div>
</div>
</body></html>
